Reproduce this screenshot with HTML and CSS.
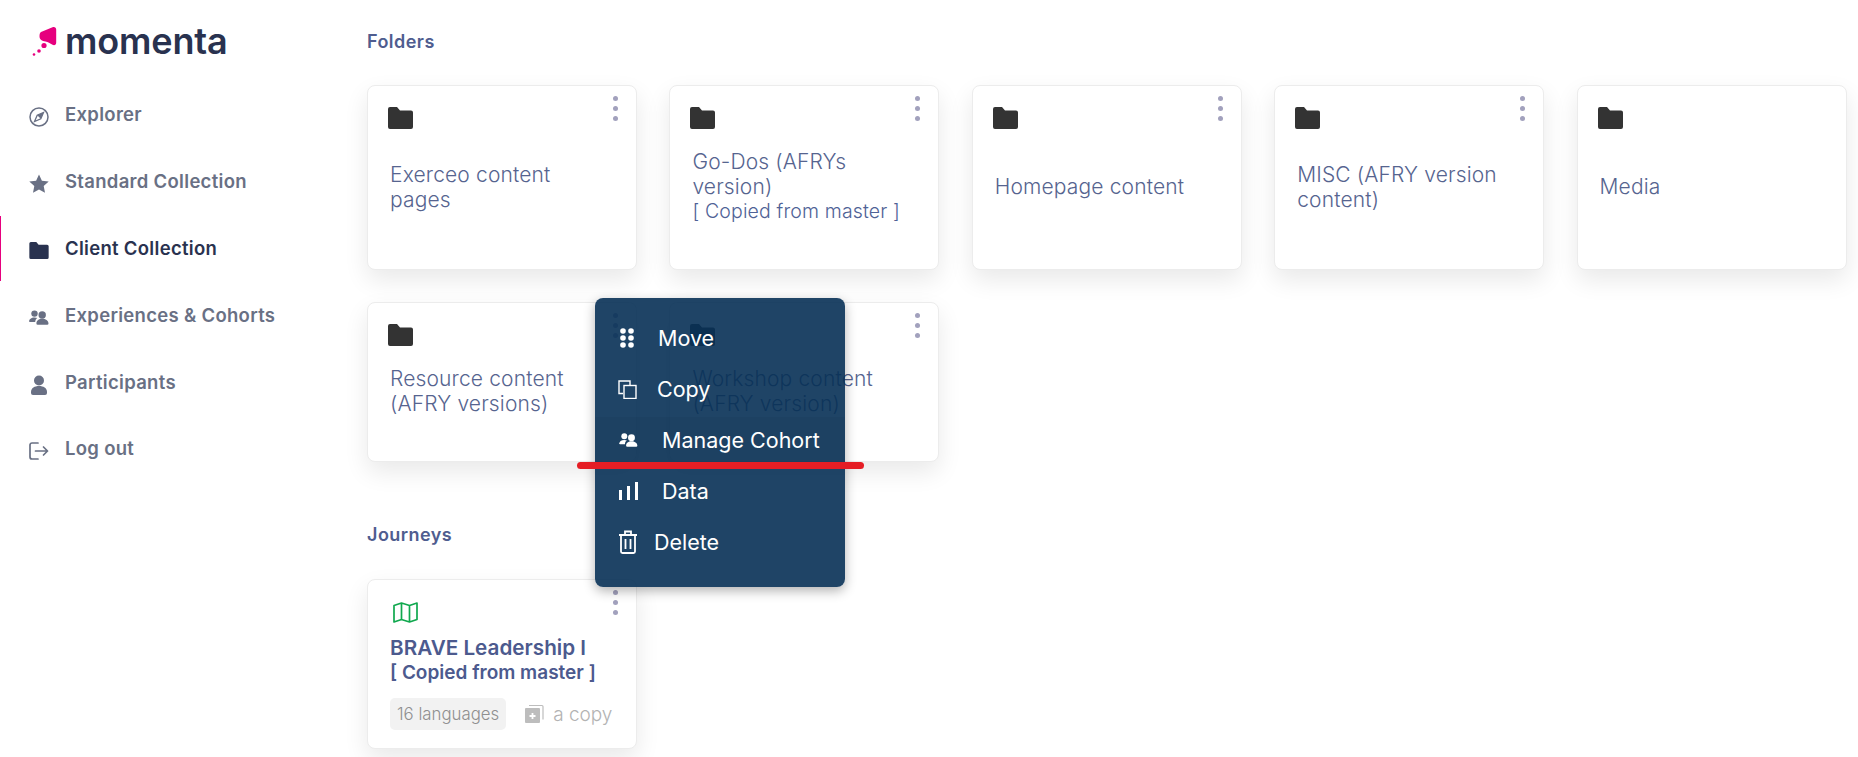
FILE: index.html
```html
<!DOCTYPE html>
<html lang="en">
<head>
  <meta charset="UTF-8">
  <title>Momenta - Client Collection</title>
  <link rel="stylesheet" href="styles.css">
</head>

<body>
  <svg class="sprites" width="0" height="0">
    <symbol id="folder" viewBox="0 0 25 22">
      <path d="M2 0h7l3 3.500h11a2 2 0 0 1 2 2V20a2 2 0 0 1-2 2H2a2 2 0 0 1-2-2V2a2 2 0 0 1 2-2z" fill="currentColor"/>
    </symbol>
    <symbol id="people" viewBox="0 0 20 15">
      <circle cx="5.500" cy="3.600" r="3.200" fill="currentColor"/>
      <path d="M0 12c0-3 2.300-4.600 5.500-4.600 1 0 2 .2 2.800.5-1.400 1-2.100 2.400-2.100 4.100H1a1 1 0 0 1-1-1z" fill="currentColor"/>
      <circle cx="13.200" cy="5" r="3.700" fill="currentColor"/>
      <path d="M7.400 13.500c0-3 2.500-4.700 5.800-4.700s6.300 1.700 6.300 4.700a1.300 1.300 0 0 1-1.300 1.300H8.700a1.300 1.300 0 0 1-1.300-1.300z" fill="currentColor"/>
    </symbol>
  </svg>

  <!-- Sidebar -->
  <aside class="sidebar">
    <div class="logo">
      <svg class="logo-mark" width="26" height="30" viewBox="0 0 26 30">
        <path d="M9 6 20.500 1.200C22.500.4 24.200 1.500 24.200 3.500V16.500C24.200 18.800 22.500 19.800 20.500 18.800 18 17.500 16 16 13.500 15.500 10 15 7.500 13.500 7.500 10.500 7.500 8.500 7.800 6.800 9 6z" fill="#e6007e"/>
        <circle cx="12" cy="19.500" r="2.600" fill="#e6007e"/>
        <circle cx="7" cy="25" r="1.800" fill="#e6007e"/>
        <circle cx="2" cy="28.500" r="1.300" fill="#e6007e"/>
      </svg>
      <span class="logo-text">momenta</span>
    </div>
    <nav class="nav">
      <a class="nav-item">
        <svg class="nav-icon" width="20" height="20" viewBox="0 0 20 20">
          <circle cx="10" cy="10" r="9" fill="none" stroke="currentColor" stroke-width="1.500"/>
          <path d="M14.500 5.500 11.800 11.800 5.500 14.500 8.200 8.200z" fill="none" stroke="currentColor" stroke-width="1.300"/>
          <path d="M14.500 5.500 11.800 11.800 8.200 8.200z" fill="currentColor"/>
        </svg>
        Explorer
      </a>
      <a class="nav-item">
        <svg class="nav-icon" width="20" height="20" viewBox="0 0 20 20">
          <path d="M10 .5l2.900 6.200 6.800.8-5 4.600 1.300 6.700L10 15.500l-6 3.300 1.300-6.700-5-4.600 6.800-.8z" fill="currentColor"/>
        </svg>
        Standard Collection
      </a>
      <a class="nav-item nav-item-active">
        <svg class="nav-icon" width="20" height="17"><use href="#folder"/></svg>
        Client Collection
      </a>
      <a class="nav-item">
        <svg class="nav-icon" width="20" height="15"><use href="#people"/></svg>
        Experiences &amp; Cohorts
      </a>
      <a class="nav-item">
        <svg class="nav-icon" width="20" height="20" viewBox="0 0 20 20">
          <circle cx="10" cy="5.500" r="5" fill="currentColor"/>
          <path d="M2 17c0-4 3.600-6 8-6s8 2 8 6v1a2 2 0 0 1-2 2H4a2 2 0 0 1-2-2z" fill="currentColor"/>
        </svg>
        Participants
      </a>
      <a class="nav-item">
        <svg class="nav-icon" width="20" height="18" viewBox="0 0 20 18">
          <path d="M9 1H3a2 2 0 0 0-2 2v12a2 2 0 0 0 2 2h6" fill="none" stroke="currentColor" stroke-width="1.700" stroke-linecap="round"/>
          <path d="M6.500 9H18.500M14.500 5l4 4-4 4" fill="none" stroke="currentColor" stroke-width="1.700" stroke-linecap="round" stroke-linejoin="round"/>
        </svg>
        Log out
      </a>
    </nav>
  </aside>

  <!-- Main content -->
  <main class="main">
    <h2 class="section-title">Folders</h2>
    <div class="folder-grid">
      <div class="card folder-card">
        <span class="kebab"></span>
        <svg class="folder-icon"><use href="#folder"/></svg>
        <div class="folder-name">Exerceo content pages</div>
      </div>
      <div class="card folder-card">
        <span class="kebab"></span>
        <svg class="folder-icon"><use href="#folder"/></svg>
        <div class="folder-name">Go-Dos (AFRYs version)<div class="folder-note">[ Copied from master ]</div></div>
      </div>
      <div class="card folder-card">
        <span class="kebab"></span>
        <svg class="folder-icon"><use href="#folder"/></svg>
        <div class="folder-name">Homepage content</div>
      </div>
      <div class="card folder-card">
        <span class="kebab"></span>
        <svg class="folder-icon"><use href="#folder"/></svg>
        <div class="folder-name">MISC (AFRY version content)</div>
      </div>
      <div class="card folder-card">
        <svg class="folder-icon"><use href="#folder"/></svg>
        <div class="folder-name">Media</div>
      </div>
      <div class="card folder-card">
        <span class="kebab"></span>
        <svg class="folder-icon"><use href="#folder"/></svg>
        <div class="folder-name">Resource content (AFRY versions)</div>
      </div>
      <div class="card folder-card">
        <span class="kebab"></span>
        <svg class="folder-icon"><use href="#folder"/></svg>
        <div class="folder-name">Workshop content (AFRY version)</div>
      </div>
    </div>

    <h2 class="section-title journeys-title">Journeys</h2>
    <div class="card journey-card">
      <span class="kebab"></span>
      <svg class="map-icon" width="25" height="21" viewBox="0 0 25 21">
        <path d="M1 3.500 8.500 1l8 2.500L24 1v16.500L16.500 20l-8-2.500L1 20zM8.500 1v16.500M16.500 3.500V20" fill="none" stroke="#10a84e" stroke-width="1.700" stroke-linejoin="round"/>
      </svg>
      <div class="journey-name">BRAVE Leadership I</div>
      <div class="journey-note">[ Copied from master ]</div>
      <div class="journey-foot">
        <span class="chip">16 languages</span>
        <svg width="20" height="20" viewBox="0 0 20 20">
          <path d="M5 1.500h13a1 1 0 0 1 1 1v13" fill="none" stroke="#bdbdbd" stroke-width="1.200"/>
          <rect x="1" y="4" width="15" height="15" rx="1" fill="#bdbdbd"/>
          <path d="M8.500 9v6M5.500 12h6" stroke="#fff" stroke-width="1.800"/>
        </svg>
        <span class="copy-label">a copy</span>
      </div>
    </div>
  </main>

  <!-- Context menu -->
  <div class="menu">
    <div class="menu-item">
      <svg class="menu-icon icon-move" width="14" height="20" viewBox="0 0 14 20" fill="#fff">
        <circle cx="3" cy="3" r="2.800"/><circle cx="11" cy="3" r="2.800"/>
        <circle cx="3" cy="10" r="2.800"/><circle cx="11" cy="10" r="2.800"/>
        <circle cx="3" cy="17" r="2.800"/><circle cx="11" cy="17" r="2.800"/>
      </svg>
      Move
    </div>
    <div class="menu-item">
      <svg class="menu-icon icon-copy" width="19" height="19" viewBox="0 0 19 19" fill="none" stroke="#fff" stroke-width="1.400">
        <path d="M5 13.500H1V1h11v4"/>
        <rect x="6" y="5.500" width="12" height="13"/>
      </svg>
      Copy
    </div>
    <div class="menu-item menu-item-hover">
      <svg class="menu-icon icon-people" width="19" height="14"><use href="#people"/></svg>
      Manage Cohort
    </div>
    <div class="menu-item">
      <svg class="menu-icon icon-data" width="19" height="18" viewBox="0 0 19 18" fill="#fff">
        <rect x="0" y="8" width="3" height="10"/><rect x="8" y="4" width="3" height="14"/><rect x="16" y="0" width="3" height="18"/>
      </svg>
      Data
    </div>
    <div class="menu-item">
      <svg class="menu-icon icon-trash" width="20" height="24" viewBox="0 0 20 24" fill="none" stroke="#fff" stroke-width="1.800">
        <path d="M1 5h18M7 5V1.500h6V5M3 5v16.500a1.500 1.500 0 0 0 1.500 1.500h11a1.500 1.500 0 0 0 1.500-1.500V5M7.500 9v10M12.500 9v10"/>
      </svg>
      Delete
    </div>
  </div>
  <div class="red-mark"></div>
</body>
</html>
```

FILE: styles.css
```css
/* Page */
html, body
{
  margin: 0;
  padding: 0;
  height: 100%;
  overflow: hidden;
  background: #fff;
}

body
{
  display: flex;
  font-family: Inter, "Liberation Sans", sans-serif;
  color: #535f8f;
}

.sprites
{
  position: absolute;
}

/* Sidebar */
.sidebar
{
  width: 367px;
  flex-shrink: 0;
}

.logo
{
  display: flex;
  align-items: center;
  height: 30px;
  padding: 26px 0 0 32px;
}

.logo-text
{
  margin-left: 7px;
  font-size: 36px;
  font-weight: 600;
  letter-spacing: -0.15px;
  color: #29324f;
}

.nav
{
  margin-top: 25px;
}

.nav-item
{
  position: relative;
  display: flex;
  align-items: center;
  height: 66.8px;
  padding-left: 29px;
  font-size: 18.5px;
  font-weight: 600;
  letter-spacing: 0.3px;
  color: #697084;
}

.nav-item-active
{
  color: #29324f;
}

.nav-item-active::before
{
  content: "";
  position: absolute;
  top: 1px;
  left: 0;
  width: 1px;
  height: 65px;
  background: #e6007e;
}

.nav-icon
{
  flex-shrink: 0;
  width: 20px;
  margin-right: 16px;
  margin-top: 6px;
}

/* Main */
.main
{
  flex: 1;
  padding-top: 32px;
  min-width: 0;
}

.section-title
{
  margin: 0;
  font-size: 18px;
  line-height: 20px;
  font-weight: 600;
  letter-spacing: 0.45px;
  color: #4f5d8f;
}

.journeys-title
{
  margin-top: 63px;
}

.folder-grid
{
  display: grid;
  grid-template-columns: repeat(5, 270px);
  grid-template-rows: 185px 160px;
  gap: 32px 32.4px;
  margin-top: 33px;
}

.card
{
  position: relative;
  box-sizing: border-box;
  width: 270px;
  background: #fff;
  border: 1px solid #ececec;
  border-radius: 8px;
  box-shadow: 0 10px 24px rgba(0, 0, 0, 0.09);
}

.kebab
{
  position: absolute;
  top: 10px;
  right: 18px;
  width: 5px;
  height: 5px;
  border-radius: 50%;
  background: #a2a1bd;
  box-shadow: 0 10px 0 #a2a1bd, 0 20px 0 #a2a1bd;
}

/* Folder cards */
.folder-card
{
  display: flex;
  flex-direction: column;
  padding: 21px 44px 25px 22px;
}

.folder-icon
{
  flex-shrink: 0;
  width: 25px;
  height: 22px;
  color: #333;
  margin-left: -2px;
}

.folder-name
{
  flex: 1;
  display: flex;
  flex-direction: column;
  justify-content: center;
  font-size: 21px;
  line-height: 25px;
  font-weight: 300;
  letter-spacing: 0.15px;
  color: #56648f;
}

.folder-note
{
  font-size: 19.5px;
  white-space: nowrap;
  color: #4f6296;
}

/* Journey card */
.journey-card
{
  height: 170px;
  margin-top: 34px;
  padding: 22px 20px 0 22px;
}

.map-icon
{
  display: block;
  margin-left: 3px;
}

.journey-name, .journey-note
{
  font-weight: 600;
  color: #4c5a8e;
}

.journey-name
{
  margin-top: 12px;
  font-size: 20.7px;
  line-height: 26px;
}

.journey-note
{
  font-size: 19px;
  line-height: 24px;
}

.journey-foot
{
  display: flex;
  align-items: center;
  margin-top: 13px;
  font-size: 16.8px;
  color: #b3b3b3;
}

.chip
{
  padding: 0 7px;
  line-height: 32px;
  margin-right: 18px;
  background: #f2f2f2;
  border-radius: 5px;
  font-weight: 300;
  color: #8f8f8f;
}

.copy-label
{
  margin-left: 9px;
  font-size: 19px;
  font-weight: 300;
}

/* Context menu */
.menu
{
  position: absolute;
  top: 298px;
  left: 595px;
  box-sizing: border-box;
  width: 250px;
  height: 289px;
  padding-top: 17px;
  border-radius: 8px;
  background: rgba(7, 48, 85, 0.9);
  box-shadow: 0 4px 12px rgba(0, 0, 0, 0.3);
  color: #fff;
  font-size: 21.5px;
}

.menu-item
{
  display: flex;
  align-items: center;
  height: 46px;
  margin-bottom: 5.1px;
  padding-left: 23px;
}

.menu-item-hover
{
  background: rgba(0, 0, 0, 0.04);
}

.menu-icon
{
  flex-shrink: 0;
  color: #fff;
}

.icon-move { margin: 0 24px 0 2px; }
.icon-copy { margin-right: 20px; }
.icon-people { margin: 0 24px 0 1px; }
.icon-data { margin: 0 24px 0 1px; }
.icon-trash { margin-right: 16px; }

/* Red underline drawn over the screenshot */
.red-mark
{
  position: absolute;
  top: 462px;
  left: 577px;
  width: 287px;
  height: 7px;
  border-radius: 4px;
  background: #e51e25;
}
```
